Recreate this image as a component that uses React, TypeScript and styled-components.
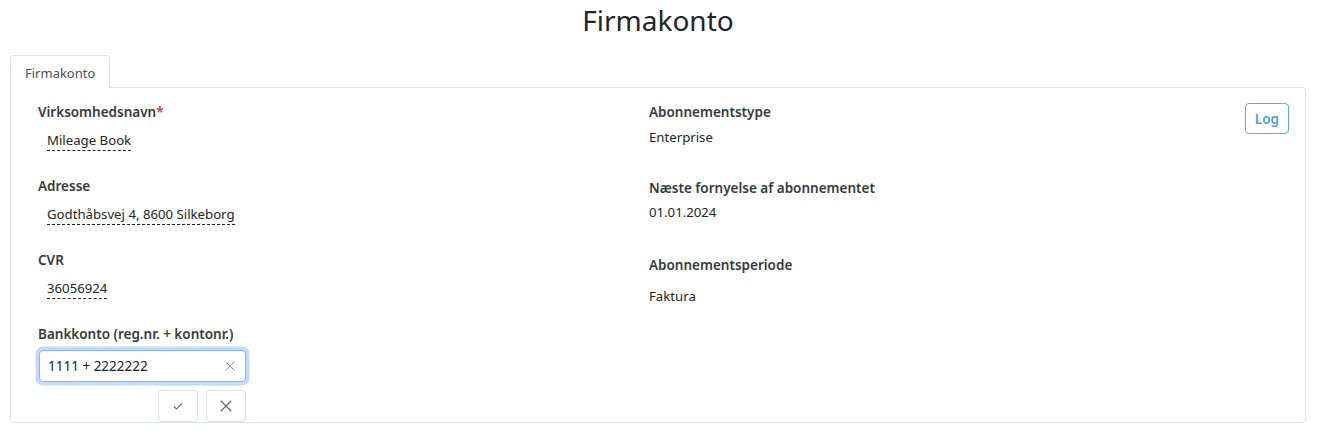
import React from 'react';
import styled, { createGlobalStyle } from 'styled-components';

const GlobalStyle = createGlobalStyle`
  body {
    margin: 0;
    background: #ffffff;
    font-family: "Noto Sans", "Open Sans", Arial, sans-serif;
    color: #212529;
  }
`;

interface Field {
  label: string;
  value: string;
  required?: boolean;
  gap?: number;
  after?: number;
}

const leftFields: Field[] = [
  { label: 'Virksomhedsnavn', value: 'Mileage Book', required: true },
  { label: 'Adresse', value: 'Godthåbsvej 4, 8600 Silkeborg' },
  { label: 'CVR', value: '36056924' },
];

const rightFields: Field[] = [
  { label: 'Abonnementstype', value: 'Enterprise', gap: 5, after: 31 },
  { label: 'Næste fornyelse af abonnementet', value: '01.01.2024', gap: 4, after: 33 },
  { label: 'Abonnementsperiode', value: 'Faktura', gap: 11, after: 0 },
];

const CheckIcon = () => (
  <svg width="12" height="12" viewBox="0 0 16 16" fill="none" stroke="#5c636a" strokeWidth="1.4">
    <path d="M2.5 8.5l3.5 3.5 7.5-7.5" />
  </svg>
);

const CrossIcon: React.FC<{ size?: number; color?: string }> = ({ size = 14, color = '#6c757d' }) => (
  <svg width={size} height={size} viewBox="0 0 16 16" fill="none" stroke={color} strokeWidth="1.3">
    <path d="M2 2l12 12M14 2L2 14" />
  </svg>
);

const App: React.FC = () => {
  return (
    <Page>
      <GlobalStyle />
      <Title>Firmakonto</Title>
      <Tabs>
        <Tab>Firmakonto</Tab>
      </Tabs>
      <Card>
        <Column>
          {leftFields.map(f => (
            <Group key={f.label}>
              <Label>
                {f.label}
                {f.required && <Required>*</Required>}
              </Label>
              <EditableValue>{f.value}</EditableValue>
            </Group>
          ))}
          <Label>Bankkonto (reg.nr. + kontonr.)</Label>
          <InputWrap>
            <Input defaultValue="1111 + 2222222" />
            <ClearButton type="button">
              <CrossIcon size={12} color="#8a8f94" />
            </ClearButton>
          </InputWrap>
          <Actions>
            <ActionButton type="button">
              <CheckIcon />
            </ActionButton>
            <ActionButton type="button">
              <CrossIcon size={14} color="#5c636a" />
            </ActionButton>
          </Actions>
        </Column>
        <Column>
          {rightFields.map(f => (
            <RightGroup key={f.label} $after={f.after ?? 0}>
              <Label>{f.label}</Label>
              <PlainValue $gap={f.gap ?? 0}>{f.value}</PlainValue>
            </RightGroup>
          ))}
        </Column>
        <LogButton type="button">Log</LogButton>
      </Card>
    </Page>
  );
};

const Page = styled.div`
  padding: 0 13px 0 10px;
`;

const Title = styled.h1`
  margin: 0;
  padding-top: 2px;
  height: 55px;
  box-sizing: border-box;
  text-align: center;
  font-size: 28px;
  font-weight: 400;
  line-height: 36px;
  color: #212529;
`;

const Tabs = styled.div`
  display: flex;
  position: relative;
  z-index: 1;
  width: fit-content;
  margin-bottom: -1px;
`;

const Tab = styled.div`
  box-sizing: border-box;
  padding: 0 14px;
  height: 33px;
  line-height: 34px;
  font-size: 13px;
  color: #495057;
  border: 1px solid #dee2e6;
  border-bottom-color: #ffffff;
  border-radius: 4px 4px 0 0;
  background: #fff;
`;

const Card = styled.div`
  display: grid;
  grid-template-columns: 611px 1fr auto;
  border: 1px solid #dee2e6;
  border-radius: 0 4px 4px 4px;
  padding: 14px 16px 0 27px;
`;

const Column = styled.div`
  display: flex;
  flex-direction: column;
  align-items: flex-start;
`;

const Group = styled.div`
  display: flex;
  flex-direction: column;
  align-items: flex-start;
  margin-bottom: 25px;
`;

const RightGroup = styled.div<{ $after: number }>`
  display: flex;
  flex-direction: column;
  align-items: flex-start;
  margin-bottom: ${p => p.$after}px;
`;

const Label = styled.div`
  font-size: 13.5px;
  font-weight: 600;
  line-height: 20px;
  color: #343a40;
`;

const Required = styled.span`
  color: #dc3545;
`;

const EditableValue = styled.span`
  margin: 8px 0 0 9px;
  font-size: 13.2px;
  line-height: 20px;
  color: #212529;
  border-bottom: 1px dashed #212529;
`;

const PlainValue = styled.div<{ $gap: number }>`
  margin-top: ${p => p.$gap}px;
  font-size: 13.2px;
  line-height: 20px;
  color: #212529;
`;

const InputWrap = styled.div`
  position: relative;
  margin: 6px 0 0 1px;
  width: 207px;
`;

const Input = styled.input`
  box-sizing: border-box;
  width: 100%;
  height: 32px;
  padding: 0 30px 0 8px;
  font-family: inherit;
  font-size: 13.5px;
  color: #212529;
  border: 1px solid #86b7fe;
  border-radius: 4px;
  box-shadow: 0 0 0 3.5px rgba(13, 110, 253, 0.25);
  outline: none;
`;

const ClearButton = styled.button`
  position: absolute;
  right: 10px;
  top: 10px;
  padding: 0;
  border: none;
  background: none;
  display: flex;
`;

const Actions = styled.div`
  display: flex;
  gap: 8px;
  margin: 8px 0 0 120px;
`;

const ActionButton = styled.button`
  box-sizing: border-box;
  width: 40px;
  height: 32px;
  display: flex;
  align-items: center;
  justify-content: center;
  background: #fff;
  border: 1px solid #dee2e6;
  border-radius: 4px;
  padding: 0;
`;

const LogButton = styled.button`
  align-self: start;
  margin-top: 1px;
  height: 31px;
  padding: 0 9px;
  font-family: inherit;
  font-size: 13.5px;
  font-weight: 600;
  color: #4b9ef3;
  background: #fff;
  border: 1px solid #5ea9f6;
  border-radius: 4px;
`;

export default App;
